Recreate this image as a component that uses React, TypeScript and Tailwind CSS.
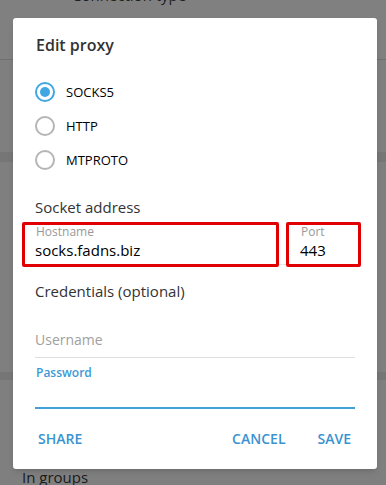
import React, { useState } from "react";

const font = { fontFamily: '"Open Sans", "Noto Sans", sans-serif' };

function Radio({ label, checked, onClick }: { label: string; checked: boolean; onClick: () => void }) {
  return (
    <button type="button" onClick={onClick} className="flex h-[34px] items-center gap-[11px] text-left">
      <span
        className={`flex size-[20px] items-center justify-center rounded-full border-2 ${
          checked ? "border-[#40a7e3]" : "border-[#b5b5b5]"
        }`}
      >
        {checked && <span className="size-[10px] rounded-full bg-[#40a7e3]" />}
      </span>
      <span className="text-[13px] leading-[18px] text-[#000]">{label}</span>
    </button>
  );
}

export default function App() {
  const [type, setType] = useState("SOCKS5");

  return (
    <div style={font} className="relative h-[485px] w-[386px] overflow-hidden bg-[#7f7f7f]">
      {/* dimmed app behind the modal */}
      <div className="flex h-full flex-col">
        <div className="h-[60px] border-b border-[#6f6f6f] bg-[#808080]">
          <p className="-mt-[14px] pl-[72px] text-[15px] leading-[18px] text-[#202020]">Connection type</p>
        </div>
        <div className="h-[92px] bg-[#7f7f7f]" />
        <div className="h-[10px] bg-[#767676]" />
        <div className="h-[210px] bg-[#7f7f7f]" />
        <div className="h-[8px] bg-[#767676]" />
        <div className="flex-1 bg-[#7f7f7f]" />
        <p className="pl-[22px] text-[15px] leading-[16px] text-[#1a1a1a]">In groups</p>
      </div>

      {/* modal */}
      <div className="absolute left-[13px] top-[18px] flex w-[364px] flex-col rounded-[3px] bg-white px-[22px] pt-[16px] shadow-md">
        <h2 className="pl-[1px] text-[16px] font-semibold leading-[22px] text-[#333]">Edit proxy</h2>

        <div className="mt-[19px] flex flex-col">
          {["SOCKS5", "HTTP", "MTPROTO"].map((t) => (
            <Radio key={t} label={t} checked={type === t} onClick={() => setType(t)} />
          ))}
        </div>

        <p className="mt-[20px] text-[15px] font-medium leading-[20px] text-[#333]">Socket address</p>

        <div className="relative mt-[7px] flex gap-[10px]">
          <div className="flex w-[255px] flex-col border-b border-[#e4e4e4] pb-[4px]">
            <span className="pl-[1px] text-[12px] leading-[16px] text-[#999]">Hostname</span>
            <span className="text-[15px] leading-[20px] text-[#000]">socks.fadns.biz</span>
          </div>
          <div className="flex flex-1 flex-col border-b border-[#e4e4e4] pb-[4px]">
            <span className="pl-[1px] text-[12px] leading-[16px] text-[#999]">Port</span>
            <span className="text-[15px] leading-[20px] text-[#000]">443</span>
          </div>
          <div className="absolute -left-[13px] -top-[2px] h-[45px] w-[257px] rounded-[2px] border-[3px] border-[#e00000]" />
          <div className="absolute left-[251px] -top-[2px] h-[45px] w-[75px] rounded-[2px] border-[3px] border-[#e00000]" />
        </div>

        <p className="mt-[16px] text-[15px] font-medium leading-[20px] text-[#333]">Credentials (optional)</p>

        <div className="mt-[26px] border-b border-[#e0e0e0] pb-[6px]">
          <span className="text-[14px] leading-[20px] text-[#a0a0a0]">Username</span>
        </div>

        <div className="mt-[7px] flex h-[44px] flex-col border-b-2 border-[#40a0d8]">
          <span className="pl-[1px] text-[12px] font-semibold leading-[16px] text-[#3d9ad6]">Password</span>
        </div>

        <div className="flex h-[60px] items-center pb-[2px] text-[14px] font-semibold text-[#3a93d0]">
          <button type="button" className="pl-[3px]">SHARE</button>
          <div className="flex-1" />
          <button type="button" className="mr-[32px]">CANCEL</button>
          <button type="button" className="mr-[4px]">SAVE</button>
        </div>
      </div>
    </div>
  );
}
